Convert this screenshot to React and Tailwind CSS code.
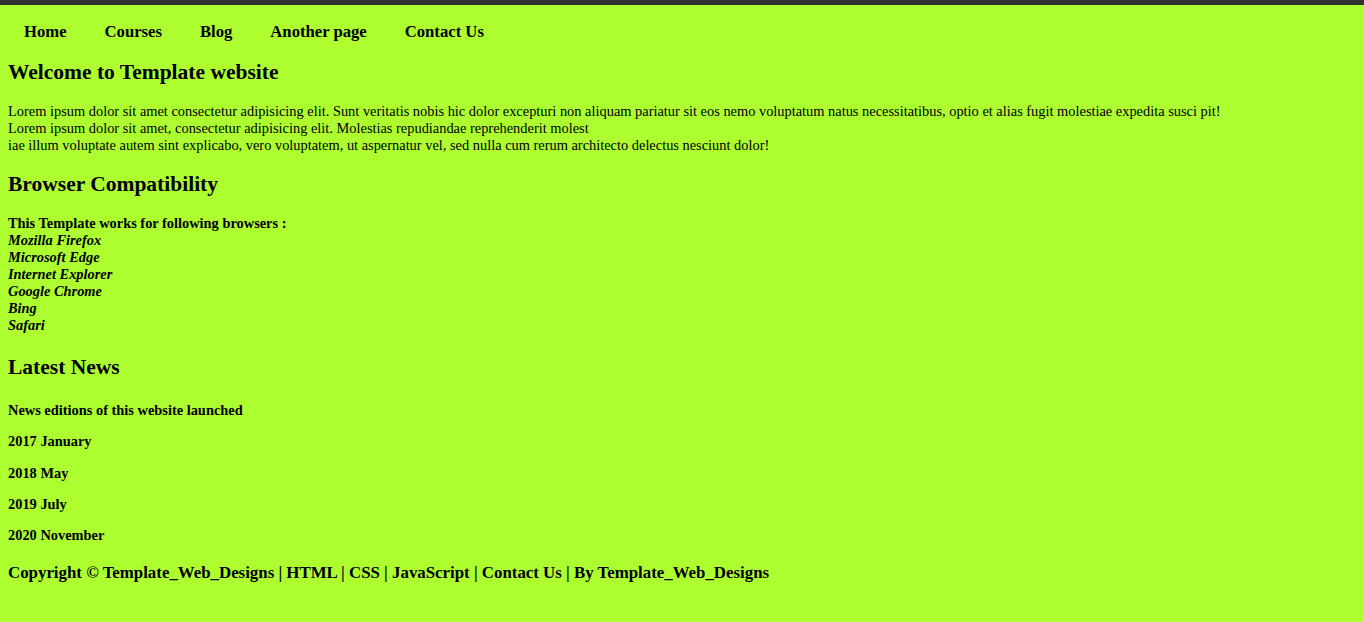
import React from 'react'

const navLinks = ['Home', 'Courses', 'Blog', 'Another page', 'Contact Us']
const browsers = ['Mozilla Firefox', 'Microsoft Edge', 'Internet Explorer', 'Google Chrome', 'Bing', 'Safari']
const editions = ['2017 January', '2018 May', '2019 July', '2020 November']

export default function App() {
  return (
    <div className="min-h-[622px] bg-[#adff2f] text-black font-['Liberation_Serif',serif]">
      <div className="h-[5px] bg-[#333333]" />

      <nav className="h-[52px] pt-[1px] flex items-center pl-[5px]">
        {navLinks.map((l) => (
          <a key={l} href="#" className="px-[19px] text-[16.66px] leading-[18px] font-bold">
            {l}
          </a>
        ))}
      </nav>

      <main className="px-[8px]">
        <h1 className="text-[21.5px] leading-[30px] font-bold">Welcome to Template website</h1>
        <p className="mt-[16px] text-[14.4px] leading-[17px]">
          Lorem ipsum dolor sit amet consectetur adipisicing elit. Sunt veritatis nobis hic dolor excepturi non aliquam pariatur sit eos nemo voluptatum natus necessitatibus, optio et alias fugit molestiae expedita susci pit!
          <br />
          Lorem ipsum dolor sit amet, consectetur adipisicing elit. Molestias repudiandae reprehenderit molest
          <br />
          iae illum voluptate autem sint explicabo, vero voluptatem, ut aspernatur vel, sed nulla cum rerum architecto delectus nesciunt dolor!
        </p>

        <h2 className="mt-[15px] text-[21.5px] leading-[30px] font-bold">Browser Compatibility</h2>
        <div className="mt-[16px] text-[14.4px] leading-[17px] font-bold">
          <p>This Template works for following browsers :</p>
          {browsers.map((b) => (
            <p key={b} className="italic">{b}</p>
          ))}
        </div>

        <h3 className="mt-[18px] text-[21.5px] leading-[30px] font-bold">Latest News</h3>
        <p className="mt-[20px] text-[14.4px] leading-[17px] font-bold">News editions of this website launched</p>
        {editions.map((e) => (
          <p key={e} className="mt-[14.25px] text-[14.4px] leading-[17px] font-bold">{e}</p>
        ))}
      </main>

      <footer className="mt-[19px] px-[8px] pb-[30px] text-[16.85px] leading-[20px] font-bold">
        Copyright © Template_Web_Designs | HTML | CSS | JavaScript | Contact Us | By Template_Web_Designs
      </footer>
    </div>
  )
}
